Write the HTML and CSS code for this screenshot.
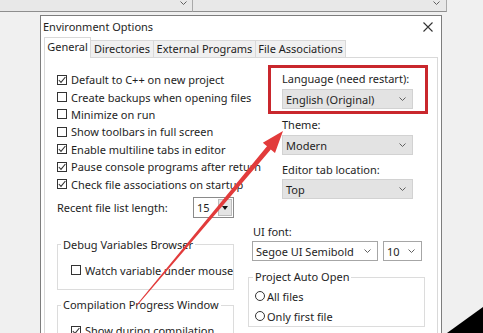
FILE: index.html
```html
<!DOCTYPE html>
<html lang="en">
<head>
  <meta charset="UTF-8" />
  <meta name="viewport" content="width=device-width, initial-scale=1.0" />
  <title>Environment Options</title>
  <link rel="stylesheet" href="styles.css">
</head>
<body>
  <div class="appbar">
    <div class="appfield first">
      <svg class="chev" width="7" height="4" viewBox="0 0 7 4"><polyline points="0.5,0.5 3.5,3.5 6.5,0.5" /></svg>
    </div>
    <div class="appfield second">
      <svg class="chev" width="7" height="4" viewBox="0 0 7 4"><polyline points="0.5,0.5 3.5,3.5 6.5,0.5" /></svg>
    </div>
  </div>

  <div class="dialog">
    <div class="titlebar">
      <span>Environment Options</span>
      <svg class="close" width="10" height="10" viewBox="0 0 10 10"><path d="M0.5 0.5 L9.5 9.5 M9.5 0.5 L0.5 9.5" /></svg>
    </div>

    <div class="tabs">
      <div class="tab active">General</div>
      <div class="tab dirs">Directories</div>
      <div class="tab ext">External Programs</div>
      <div class="tab assoc">File Associations</div>
    </div>

    <div class="panel">
      <!-- colonne gauche -->
      <div class="col-left">
        <div class="check"><span class="box"><svg width="8" height="8" viewBox="0 0 8 8"><polyline points="0.8,4 3,6.4 7.4,1" /></svg></span>Default to C++ on new project</div>
        <div class="check"><span class="box"></span>Create backups when opening files</div>
        <div class="check"><span class="box"></span>Minimize on run</div>
        <div class="check"><span class="box"></span>Show toolbars in full screen</div>
        <div class="check"><span class="box"><svg width="8" height="8" viewBox="0 0 8 8"><polyline points="0.8,4 3,6.4 7.4,1" /></svg></span>Enable multiline tabs in editor</div>
        <div class="check"><span class="box"><svg width="8" height="8" viewBox="0 0 8 8"><polyline points="0.8,4 3,6.4 7.4,1" /></svg></span>Pause console programs after return</div>
        <div class="check"><span class="box"><svg width="8" height="8" viewBox="0 0 8 8"><polyline points="0.8,4 3,6.4 7.4,1" /></svg></span>Check file associations on startup</div>

        <div class="recent">
          <span>Recent file list length:</span>
          <div class="spin">
            <span>15</span>
            <span class="spin-btn"><span class="tri"></span></span>
          </div>
        </div>

        <fieldset class="group">
          <legend>Debug Variables Browser</legend>
          <div class="check inner"><span class="box"></span>Watch variable under mouse</div>
        </fieldset>

        <fieldset class="group second">
          <legend>Compilation Progress Window</legend>
          <div class="check inner"><span class="box"><svg width="8" height="8" viewBox="0 0 8 8"><polyline points="0.8,4 3,6.4 7.4,1" /></svg></span>Show during compilation</div>
        </fieldset>
      </div>

      <!-- colonne droite -->
      <div class="col-right">
        <div class="lang-box">
          <div class="label">Language (need restart):</div>
          <div class="combo flat">
            <span>English (Original)</span>
            <svg class="chev" width="7" height="4" viewBox="0 0 7 4"><polyline points="0.5,0.5 3.5,3.5 6.5,0.5" /></svg>
          </div>
        </div>

        <div class="options">
          <div class="label theme">Theme:</div>
          <div class="combo flat">
            <span>Modern</span>
            <svg class="chev" width="7" height="4" viewBox="0 0 7 4"><polyline points="0.5,0.5 3.5,3.5 6.5,0.5" /></svg>
          </div>
          <div class="label editor">Editor tab location:</div>
          <div class="combo flat editor-combo">
            <span>Top</span>
            <svg class="chev" width="7" height="4" viewBox="0 0 7 4"><polyline points="0.5,0.5 3.5,3.5 6.5,0.5" /></svg>
          </div>
        </div>

        <div class="label uifont">UI font:</div>
        <div class="font-row">
          <div class="combo white font-name">
            <span>Segoe UI Semibold</span>
            <svg class="chev" width="7" height="4" viewBox="0 0 7 4"><polyline points="0.5,0.5 3.5,3.5 6.5,0.5" /></svg>
          </div>
          <div class="combo white font-size">
            <span>10</span>
            <svg class="chev" width="7" height="4" viewBox="0 0 7 4"><polyline points="0.5,0.5 3.5,3.5 6.5,0.5" /></svg>
          </div>
        </div>

        <fieldset class="group auto-open">
          <legend>Project Auto Open</legend>
          <div class="radio first"><span class="dot"></span>All files</div>
          <div class="radio"><span class="dot"></span>Only first file</div>
        </fieldset>
      </div>
    </div>
  </div>

  <!-- fleche rouge + coin noir -->
  <svg class="overlay" width="483" height="333" viewBox="0 0 483 333">
    <polygon class="arrow" points="137.4,305.3 136.6,304.7 267.0,146.3 262.8,142.8 283,131 275.0,153.0 270.8,149.5" />
    <polygon class="corner" points="447,333 483,307 483,333" />
  </svg>
</body>
</html>
```

FILE: styles.css
```css
* {
  margin: 0;
  padding: 0;
  box-sizing: border-box;
}

html, body {
  height: 100%;
}

body {
  position: relative;
  overflow: hidden;
  background: #f0f0f0;
  font-family: "Noto Sans", "Open Sans", sans-serif;
  font-size: 11px;
  color: #1e1e1e;
}

.chev polyline {
  fill: none;
  stroke: #606060;
  stroke-width: 1;
}

/* barre de l'application derriere */
.appbar {
  display: flex;
  height: 13px;
}

.appfield {
  height: 12px;
  display: flex;
  justify-content: flex-end;
  align-items: flex-start;
  padding: 1px 5px 0 0;
  background: #e8e8e8;
  border-bottom: 1px solid #8e8e8e;
  border-right: 1px solid #a9a9a9;
}

.appfield.first {
  width: 193px;
}

.appfield.second {
  width: 254px;
  padding-right: 6px;
}

/* fenetre */
.dialog {
  display: flex;
  flex-direction: column;
  width: 402px;
  height: 320px;
  margin: 2px 0 0 40px;
  background: #fff;
  border: 1px solid #7d7d7d;
  border-bottom: 0;
}

.titlebar {
  flex: none;
  display: flex;
  justify-content: space-between;
  align-items: center;
  height: 21px;
  padding: 0 8px 0 2px;
}

.close path {
  stroke: #333;
  stroke-width: 1.1;
}

.tabs {
  flex: none;
  display: flex;
  align-items: flex-end;
  height: 20px;
  padding-left: 3px;
}

.tab {
  height: 17px;
  line-height: 16px;
  text-align: center;
  background: #f0f0f0;
  border: 1px solid #d9d9d9;
  border-bottom: 0;
  margin-left: -1px;
}

.tab.active {
  position: relative;
  width: 47px;
  height: 21px;
  line-height: 18px;
  margin: 0 0 -1px 0;
  background: #fff;
  z-index: 1;
}

.tab.dirs {
  width: 64px;
}

.tab.ext {
  width: 103px;
}

.tab.assoc {
  width: 91px;
}

.panel {
  flex: 1;
  min-height: 0;
  display: flex;
  align-items: flex-start;
  gap: 13px;
  margin: 0 3px;
  padding: 10px 12px 0 12px;
  border: 1px solid #d9d9d9;
  border-bottom: 0;
}

/* colonne gauche */
.col-left {
  display: flex;
  flex-direction: column;
  width: 177px;
  flex: none;
  padding-top: 3px;
}

.check {
  flex: none;
  display: flex;
  align-items: center;
  gap: 4px;
  height: 17.4px;
  white-space: nowrap;
}

.box {
  display: flex;
  align-items: center;
  justify-content: center;
  flex: none;
  width: 10px;
  height: 10px;
  border: 1px solid #333;
  background: #fff;
}

.box polyline {
  fill: none;
  stroke: #333;
  stroke-width: 1.1;
}

.recent {
  flex: none;
  display: flex;
  justify-content: space-between;
  align-items: center;
  height: 22px;
  margin-top: 4px;
  white-space: nowrap;
}

.spin {
  display: flex;
  justify-content: space-between;
  align-items: center;
  width: 41px;
  height: 21px;
  padding-left: 3px;
  border: 1px solid #8a8a8a;
}

.spin-btn {
  display: flex;
  justify-content: center;
  align-items: center;
  width: 14px;
  height: 17px;
  margin-right: 1px;
  background: #e4e4e4;
  border: 1px solid #bdbdbd;
}

.tri {
  width: 0;
  height: 0;
  border-left: 3px solid transparent;
  border-right: 3px solid transparent;
  border-top: 4px solid #111;
}

fieldset.group {
  flex: none;
  min-width: 0;
  margin-top: 18px;
  padding: 0 0 10px 3px;
  border: 1px solid #dcdcdc;
}

fieldset.group.second {
  margin-top: 7px;
}

legend {
  padding: 0 2px;
  line-height: 16px;
  white-space: nowrap;
}

.check.inner {
  margin: 9px 0 0 10px;
}

/* colonne droite */
.col-right {
  display: flex;
  flex-direction: column;
  width: 178px;
  flex: none;
}

.label {
  flex: none;
  line-height: 16px;
  white-space: nowrap;
}

.lang-box {
  flex: none;
  width: 160px;
  margin: -3px 0 0 21px;
  padding: 3px 12px 2px 11px;
  border: 3px solid #c9272d;
}

.combo {
  flex: none;
  display: flex;
  justify-content: space-between;
  align-items: center;
  height: 20px;
  margin-top: 2px;
  padding: 0 6px 0 3px;
  white-space: nowrap;
}

.combo.flat {
  background: #e3e3e3;
  border: 1px solid #d2d2d2;
}

.combo.white {
  margin-top: 0;
  background: #fff;
  border: 1px solid #a6a6a6;
}

.options {
  flex: none;
  width: 131px;
  margin-left: 35px;
}

.label.theme {
  margin-top: 3px;
}

.label.editor {
  margin-top: 7px;
}

.combo.editor-combo {
  margin-top: 1px;
}

.label.uifont {
  margin: 25px 0 0 6px;
}

.font-row {
  flex: none;
  display: flex;
  gap: 5px;
  margin: 1px 0 0 5px;
}

.font-name {
  width: 126px;
}

.font-size {
  width: 39px;
}

fieldset.group.auto-open {
  width: 177px;
  margin: 8px 0 0 1px;
  padding: 0 0 0 4px;
}

.radio {
  display: flex;
  align-items: center;
  gap: 2px;
  height: 20px;
  margin-left: 2px;
  white-space: nowrap;
}

.radio.first {
  margin-top: 1px;
}

.dot {
  flex: none;
  width: 10px;
  height: 10px;
  border: 1px solid #333;
  border-radius: 50%;
}

/* annotations par-dessus */
.overlay {
  position: absolute;
  top: 0;
  left: 0;
  pointer-events: none;
}

.arrow {
  fill: #e23b3b;
}

.corner {
  fill: #000;
}
```
